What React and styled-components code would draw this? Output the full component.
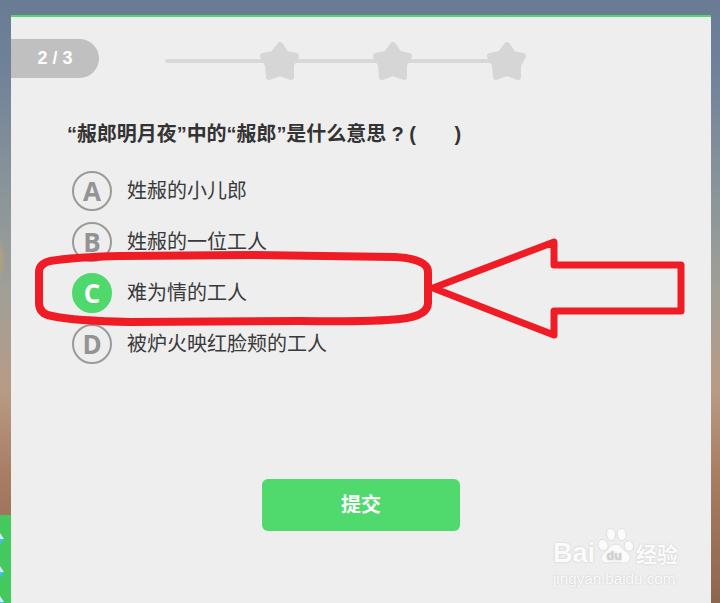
import React from "react";
import styled, { createGlobalStyle } from "styled-components";

const GlobalStyle = createGlobalStyle`
  html, body {
    margin: 0;
    padding: 0;
    height: 100%;
    overflow: hidden;
  }
  body {
    font-family: "Liberation Sans", "Noto Sans CJK SC", sans-serif;
  }
`;

const Page = styled.div`
  position: relative;
  display: flex;
  flex-direction: column;
  box-sizing: border-box;
  height: 603px;
  padding: 15px 9px 0 11px;
  overflow: hidden;
  background:
    radial-gradient(ellipse 5px 24px at 0 258px, rgba(214, 170, 90, 0.45), rgba(214, 170, 90, 0) 100%),
    linear-gradient(180deg, #6a7c94 0, #70829a 70px, #8a9499 190px, #a09f98 290px, #b89b85 390px, #a67c62 480px, #8c6750 603px);
`;

const Card = styled.div`
  flex: 1;
  display: flex;
  flex-direction: column;
  background: #eeeeee;
  border-top: 2px solid #4fd96c;
`;

const Header = styled.div`
  display: flex;
  align-items: flex-start;
  padding-top: 22px;
`;

const Pill = styled.div`
  display: flex;
  align-items: center;
  justify-content: center;
  width: 88px;
  height: 39px;
  background: #c0c0c0;
  border-radius: 0 20px 20px 0;
  color: #fff;
  font-size: 18px;
  font-weight: bold;
`;

const Track = styled.div`
  display: flex;
  align-items: center;
  height: 38px;
  margin: 3px 0 0 66px;
`;

const Segment = styled.div`
  width: ${(p) => p.$w}px;
  height: 4px;
  margin: 0 -8px 0 ${(p) => (p.$first ? 0 : -8)}px;
  background: #d8d8d8;
  border-radius: 2px;
`;

const StarIcon = styled.svg`
  position: relative;
  display: block;
  width: 39px;
  height: 38px;
  fill: #d6d6d6;
  stroke: #d6d6d6;
  stroke-width: 6;
  stroke-linejoin: round;
`;

const Question = styled.div`
  margin: 40px 0 0 56px;
  height: 28px;
  line-height: 28px;
  font-size: 20px;
  font-weight: bold;
  letter-spacing: -0.05px;
  color: #333;
  white-space: pre;
`;

const Options = styled.div`
  display: flex;
  flex-direction: column;
  gap: 11px;
  margin: 23px 0 0 61px;
`;

const Option = styled.div`
  display: flex;
  align-items: center;
  height: 40px;
`;

const Badge = styled.div`
  display: flex;
  align-items: center;
  justify-content: center;
  box-sizing: border-box;
  width: 40px;
  height: 40px;
  border-radius: 50%;
  border: 2.5px solid ${(p) => (p.$active ? "#4fd96c" : "#9a9a9a")};
  background: ${(p) => (p.$active ? "#4fd96c" : "transparent")};
  color: ${(p) => (p.$active ? "#fff" : "#939393")};
  font-family: "Open Sans", sans-serif;
  font-size: 26px;
  font-weight: 700;
  line-height: 1;
`;

const Label = styled.div`
  margin-left: 15px;
  padding-bottom: 4px;
  font-family: "Noto Sans CJK SC", sans-serif;
  font-size: 20px;
  color: #3a3a3a;
`;

const Submit = styled.button`
  align-self: center;
  width: 198px;
  height: 52px;
  margin-top: 114.5px;
  padding-bottom: 3px;
  border: 0;
  border-radius: 6px;
  background: #50d96c;
  color: #fff;
  font-family: "Noto Sans CJK SC", sans-serif;
  font-size: 20px;
  font-weight: bold;
`;

const SideTab = styled.div`
  position: absolute;
  left: 0;
  bottom: 0;
  width: 11px;
  height: 88px;
  background: #44c95f;
  overflow: hidden;
`;

const Markup = styled.svg`
  position: absolute;
  left: 0;
  top: 0;
  fill: none;
  stroke: #ef1c25;
  stroke-linejoin: round;
  pointer-events: none;
`;

const Watermark = styled.div`
  position: absolute;
  left: 553px;
  top: 524px;
  width: 135px;
  color: #fbfbfb;
  text-shadow: 0 0 2px #c4c4c4;
  white-space: nowrap;
`;

const BrandRow = styled.div`
  display: flex;
  align-items: flex-end;
  height: 44px;
`;

const BrandText = styled.span`
  font-size: 27px;
  font-weight: bold;
  line-height: 30px;
`;

const Paw = styled.svg`
  flex: none;
  width: 41px;
  height: 42px;
  margin-bottom: 1px;
  fill: #fbfbfb;
  stroke: #d0d0d0;
  stroke-width: 0.6;
`;

const PawText = styled.text`
  font-size: 14px;
  font-weight: bold;
  fill: #d0d0d0;
  stroke: none;
`;

const BrandCn = styled.span`
  font-family: "Noto Sans CJK SC", sans-serif;
  font-size: 21px;
  font-weight: bold;
  line-height: 30px;
`;

const BrandUrl = styled.div`
  margin-top: 3px;
  font-size: 15.2px;
  line-height: 16px;
`;

const Star = () => (
  <StarIcon viewBox="0 0 39 38">
    <polygon points="20,3 26,12 36,14 31,23 31,35 20,31 9,35 8,23 3,14 13,12" />
  </StarIcon>
);

const Chevron = ({ y }) => (
  <>
    <polygon points={`0,${y - 6} 4,${y} 0,${y}`} fill="#d9e6f8" />
    <polygon points={`0,${y} 4,${y} 0,${y + 6}`} fill="#33c6f0" />
  </>
);

const options = [
  { key: "A", text: "姓赧的小儿郎" },
  { key: "B", text: "姓赧的一位工人" },
  { key: "C", text: "难为情的工人", active: true },
  { key: "D", text: "被炉火映红脸颊的工人" },
];

export default function App() {
  return (
    <Page>
      <GlobalStyle />
      <Card>
        <Header>
          <Pill>2 / 3</Pill>
          <Track>
            <Segment $first $w={103} />
            <Star />
            <Segment $w={90} />
            <Star />
            <Segment $w={91} />
            <Star />
          </Track>
        </Header>
        <Question>“赧郎明月夜”中的“赧郎”是什么意思 ? (       )</Question>
        <Options>
          {options.map((o) => (
            <Option key={o.key}>
              <Badge $active={o.active}>{o.key}</Badge>
              <Label>{o.text}</Label>
            </Option>
          ))}
        </Options>
        <Submit>提交</Submit>
      </Card>
      <SideTab>
        <svg width="11" height="88">
          <Chevron y={24} />
          <Chevron y={57} />
          <Chevron y={87} />
        </svg>
      </SideTab>
      <Markup width="720" height="603" strokeWidth="8">
        <path d="M39 272 Q39 264 50 261 Q75 257 120 256 L250 255 L395 257 Q428 259 428 272 L428 303 Q428 316 400 319 Q370 322 300 321 L130 322 Q75 321 52 316 Q39 314 39 303 Z" />
        <path
          d="M433 288 L554 242 L554 265 L681 265 L681 311 L554 311 L554 335 Z"
          strokeWidth="7"
        />
      </Markup>
      <Watermark>
        <BrandRow>
          <BrandText>Bai</BrandText>
          <Paw viewBox="0 0 46 44">
            <ellipse cx="9" cy="21" rx="5.5" ry="6.5" transform="rotate(-20 9 21)" />
            <ellipse cx="18" cy="9" rx="5" ry="7" transform="rotate(-8 18 9)" />
            <ellipse cx="30" cy="9" rx="5" ry="7" transform="rotate(-8 30 9)" />
            <ellipse cx="38" cy="22" rx="5" ry="6" transform="rotate(-25 38 22)" />
            <path d="M23 20 C30 20 30 26 36 29 C42 33 40 42 32 41 C27 40 19 40 14 41 C6 42 5 33 11 29 C16 26 16 20 23 20 Z" />
            <PawText x="13" y="38">du</PawText>
          </Paw>
          <BrandCn>经验</BrandCn>
        </BrandRow>
        <BrandUrl>jingyan.baidu.com</BrandUrl>
      </Watermark>
    </Page>
  );
}
